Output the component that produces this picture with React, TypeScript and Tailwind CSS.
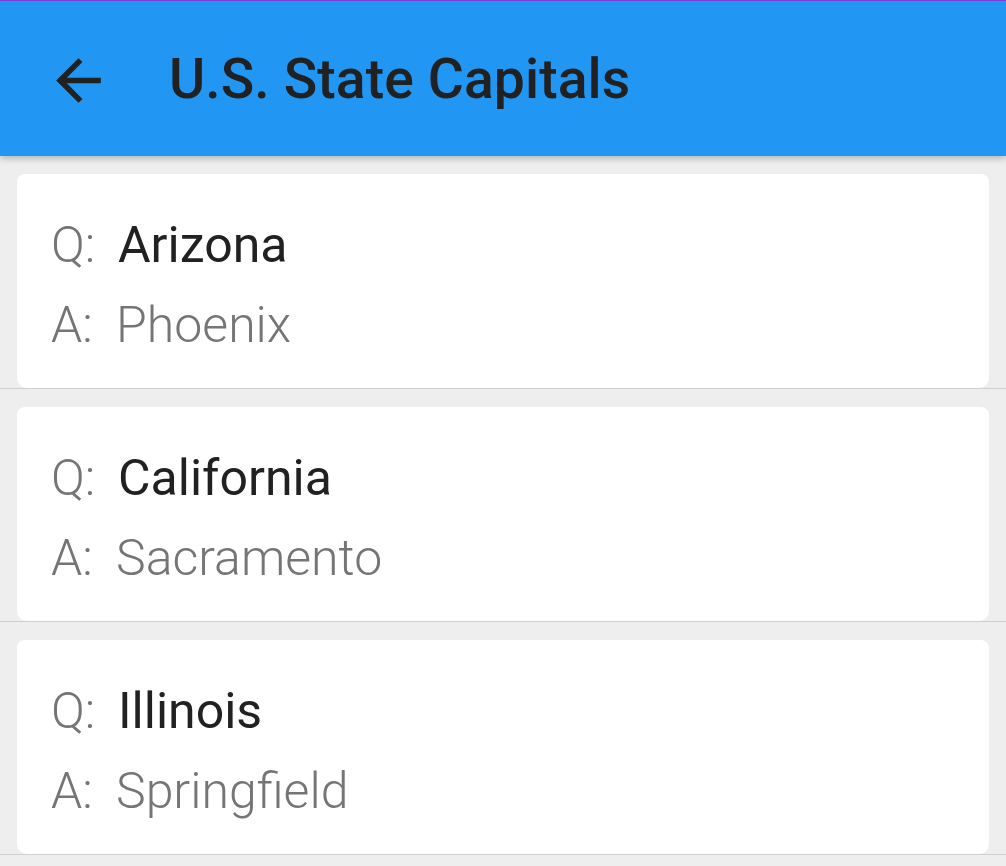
const cards = [
  { q: "Arizona", a: "Phoenix" },
  { q: "California", a: "Sacramento" },
  { q: "Illinois", a: "Springfield" },
];

function BackArrow() {
  return (
    <svg width="67" height="67" viewBox="0 0 24 24" fill="#212121">
      <path d="M20 11H7.83l5.59-5.59L12 4l-8 8 8 8 1.41-1.41L7.83 13H20v-2z" />
    </svg>
  );
}

export default function App() {
  return (
    <div className="min-h-[866px] w-[1006px] overflow-hidden bg-[#eeeeee] font-['Roboto',sans-serif]">
      <header className="relative z-10 flex h-[156px] items-center border-t border-[#7b3fd6] bg-[#2196f3] pt-[3px] shadow-[0_3px_6px_rgba(0,0,0,0.22)]">
        <div className="ml-[45px] flex items-center">
          <BackArrow />
        </div>
        <h1 className="ml-[57px] text-[55.3px] font-medium leading-none tracking-[0.1px] text-[#212121]">
          U.S. State Capitals
        </h1>
      </header>

      <main>
        {cards.map((card) => (
          <div key={card.q} className="border-b border-[#cfcfcf] px-[17px] pt-[18px]">
            <div className="h-[214px] rounded-t-[8px] rounded-b-[10px] bg-white px-[34px] pt-[31px]">
              <p className="flex h-[80px] items-center text-[50px] leading-none">
                <span className="w-[67px] font-light text-[#757575]">Q:</span>
                <span className="text-[#212121]">{card.q}</span>
              </p>
              <p className="flex h-[80px] items-center text-[50px] font-light leading-none text-[#757575]">
                <span className="w-[65px]">A:</span>
                <span>{card.a}</span>
              </p>
            </div>
          </div>
        ))}
      </main>
    </div>
  );
}
